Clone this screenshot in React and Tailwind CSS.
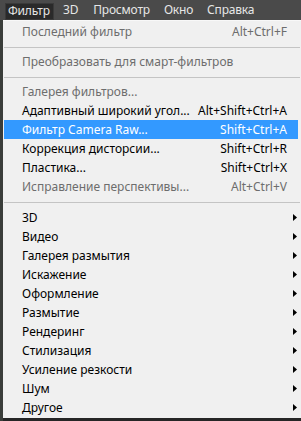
import React from "react";

const Arrow = () => (
  <svg width="4" height="7" viewBox="0 0 4 7" className="block">
    <path d="M0 0 L4 3.5 L0 7 Z" fill="#000" />
  </svg>
);

function Row({ label, shortcut, disabled, active, sub }) {
  const color = active ? "text-white" : disabled ? "text-[#6d6d6d]" : "text-black";
  return (
    <div
      className={`flex h-[19px] items-center mr-[3px] ml-[1px] pl-[18px] ${
        active ? "bg-[#3399ff]" : ""
      } ${color}`}
    >
      <span className="flex-1 whitespace-nowrap">{label}</span>
      {shortcut && <span className="mr-[11px] whitespace-nowrap">{shortcut}</span>}
      {sub && (
        <span className="mr-[1px]">
          <Arrow />
        </span>
      )}
    </div>
  );
}

const Sep = ({ h = "h-[11px]" }) => (
  <div className={`${h} flex flex-col pt-[6px] ml-[1px] mr-[1px]`}>
    <div className="h-px bg-[#c4c4c4]" />
  </div>
);

export default function App() {
  const subs = [
    "3D",
    "Видео",
    "Галерея размытия",
    "Искажение",
    "Оформление",
    "Размытие",
    "Рендеринг",
    "Стилизация",
    "Усиление резкости",
    "Шум",
    "Другое",
  ];
  return (
    <div
      className="w-[301px] h-[421px] bg-[#262626] overflow-hidden flex flex-col text-[12px]"
      style={{ fontFamily: '"Noto Sans", "Open Sans", sans-serif' }}
    >
      <div className="h-[20px] bg-[#4a4a4a] flex items-center text-[#e6e6e6] text-[12px] tracking-[-0.2px] shrink-0">
        <div className="ml-[5px] w-[49px] h-[17px] mt-[2px] pl-[2px] flex items-center bg-[#2a2a2a] border border-[#3a3a3a]">
          Фильтр
        </div>
        <span className="ml-[9px]">3D</span>
        <span className="ml-[15px]">Просмотр</span>
        <span className="ml-[14px]">Окно</span>
        <span className="ml-[14px]">Справка</span>
      </div>
      <div className="flex flex-1 min-h-0">
        <div className="w-[3px] bg-[#3a3d3a] shrink-0" />
        <div className="flex-1 h-[398px] bg-[#f0f0f0] border-t border-[#f8f8f8] pt-[1px] flex flex-col">
          <Row label="Последний фильтр" shortcut="Alt+Ctrl+F" disabled />
          <Sep />
          <Row label="Преобразовать для смарт-фильтров" disabled />
          <Sep />
          <Row label="Галерея фильтров..." disabled />
          <Row label="Адаптивный широкий угол..." shortcut="Alt+Shift+Ctrl+A" />
          <Row label="Фильтр Camera Raw..." shortcut="Shift+Ctrl+A" active />
          <Row label="Коррекция дисторсии..." shortcut="Shift+Ctrl+R" />
          <Row label="Пластика..." shortcut="Shift+Ctrl+X" />
          <Row label="Исправление перспективы..." shortcut="Alt+Ctrl+V" disabled />
          <Sep h="h-[12px]" />
          {subs.map((s) => (
            <Row key={s} label={s} sub />
          ))}
        </div>
      </div>
    </div>
  );
}
